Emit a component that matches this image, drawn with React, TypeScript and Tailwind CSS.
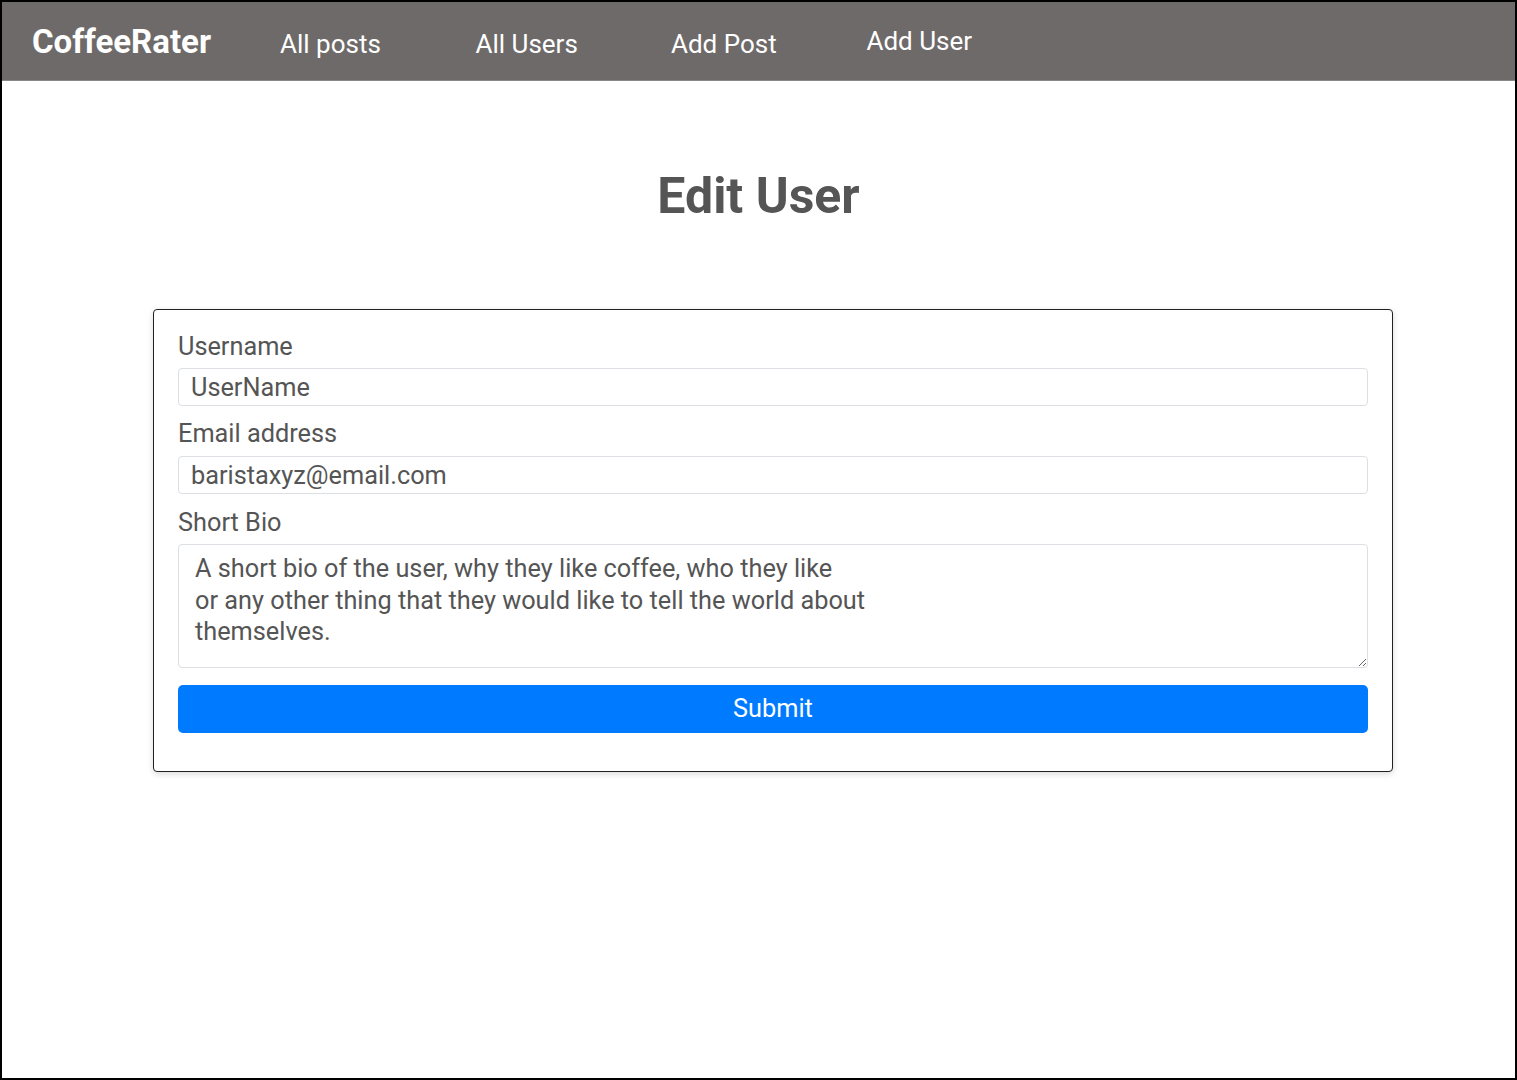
import React from 'react';

const links = ['All posts', 'All Users', 'Add Post', 'Add User'];

const bio =
  'A short bio of the user, why they like coffee, who they like\nor any other thing that they would like to tell the world about\nthemselves.';

export default function App() {
  return (
    <div className="h-[1080px] w-full border-2 border-black bg-white text-[#555] font-['Roboto',sans-serif] overflow-hidden">
      {/* Top nav */}
      <nav className="flex h-[79px] items-baseline border-b border-[#8c8888] bg-[#6e6a69] pl-[30px] pt-[15px]">
        <span className="w-[248px] text-[33px] font-bold text-white">CoffeeRater</span>
        {links.map((l, i) => (
          <a
            key={l}
            href="#"
            className={
              'w-[195.5px] text-[26px] font-normal text-white ' + (i === 3 ? '-translate-y-[3px]' : '')
            }
          >
            {l}
          </a>
        ))}
      </nav>

      <h1 className="mt-[85px] text-center text-[50px] font-bold leading-[60px] text-[#555]">Edit User</h1>

      {/* Form card */}
      <div className="ml-[151px] mt-[83px] w-[1240px] rounded-[4px] border border-[#222] bg-white px-[24px] pt-[23px] pb-[38px] shadow-[0_2px_6px_rgba(0,0,0,0.15)]">
        <label className="block text-[25.3px] leading-[28px]">Username</label>
        <input
          className="mt-[7px] block h-[38px] w-full rounded-[4px] border border-[#dcdfe3] px-[12px] text-[25.3px] text-[#555] outline-none"
          defaultValue="UserName"
        />

        <label className="mt-[14px] block text-[25.3px] leading-[28px]">Email address</label>
        <input
          className="mt-[8px] block h-[38px] w-full rounded-[4px] border border-[#dcdfe3] px-[12px] text-[25.3px] text-[#555] outline-none"
          defaultValue="baristaxyz@email.com"
        />

        <label className="mt-[15px] block text-[25.3px] leading-[28px]">Short Bio</label>
        <textarea
          className="mt-[7px] block h-[124px] w-full rounded-[4px] border border-[#dcdfe3] px-[16px] pt-[8px] text-[25.3px] leading-[31.5px] text-[#555] outline-none"
          defaultValue={bio}
        />

        <button className="mt-[17px] block h-[48px] w-full rounded-[5px] bg-[#007bff] text-[25.3px] text-white">
          Submit
        </button>
      </div>
    </div>
  );
}
